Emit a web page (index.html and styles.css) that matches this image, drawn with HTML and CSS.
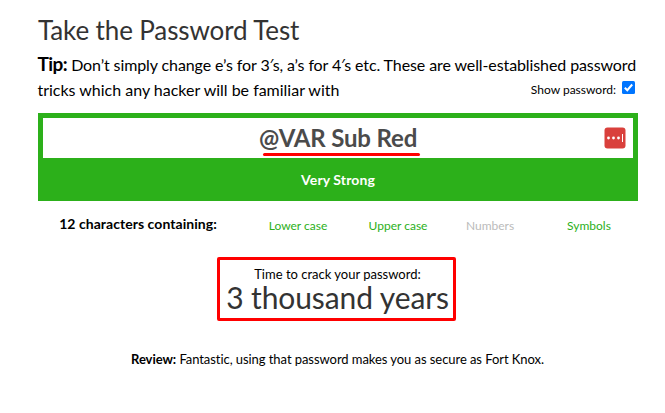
FILE: index.html
```html
<!DOCTYPE html>
<html lang="en">
<head>
<meta charset="utf-8">
<title>Take the Password Test</title>
<link rel="stylesheet" href="styles.css">
</head>
<body>
<main class="test">
  <h1 class="title">Take the Password Test</h1>
  <div class="tip">
    <p class="tip-text"><span class="tip-first"><strong>Tip:</strong> Don’t simply change e’s for 3<span class="prime">′</span>s, a’s for 4<span class="prime">′</span>s etc. These are well-established password</span><br>tricks which any hacker will be familiar with</p>
    <label class="show">Show password: <span class="check"><svg viewBox="0 0 13 13" width="13" height="13"><rect width="13" height="13" rx="1.5" fill="#0075ff"/><path d="M2.8 6.7 5.3 9.2 10.2 3.5" fill="none" stroke="#fff" stroke-width="2"/></svg></span></label>
  </div>
  <section class="meter">
    <div class="field"><span class="password">@VAR Sub Red</span>
      <svg class="manager" viewBox="0 0 22 22" width="22" height="22"><rect x=".5" y=".5" width="21" height="21" rx="3" fill="#d9403c"/><g fill="#fff"><circle cx="4.5" cy="11" r="1.4"/><circle cx="9.5" cy="11" r="1.4"/><circle cx="14.5" cy="11" r="1.4"/><rect x="18" y="7" width="1" height="8"/></g></svg>
    </div>
    <div class="strength">Very Strong</div>
  </section>
  <div class="kinds">
    <strong class="count">12 characters containing:</strong>
    <span class="kind">Lower case</span><span class="kind">Upper case</span><span class="kind off">Numbers</span><span class="kind">Symbols</span>
  </div>
  <section class="crack"><div class="crack-label">Time to crack your password:</div><div class="crack-time">3 thousand years</div></section>
  <p class="review"><strong>Review:</strong> Fantastic, using that password makes you as secure as Fort Knox.</p>
</main>
</body>
</html>
```
FILE: styles.css
```css
* { box-sizing: border-box; }
body { margin: 0; background: #fff; color: #000; font-family: Lato, sans-serif; font-variant-ligatures: none; }
.test { width: 600px; margin-left: 38px; padding-top: 14px; }
.title { margin: 0; font-size: 26px; line-height: 32px; font-weight: 400; color: #333; letter-spacing: -0.12px; }
.tip { position: relative; height: 67px; padding-top: 5px; }
.tip-text { margin: 0 0 0 -0.5px; font-size: 16px; line-height: 25px; white-space: nowrap; letter-spacing: -0.01px; }
.tip-first { letter-spacing: -0.1px; }
.tip-text strong { font-size: 19px; letter-spacing: -0.55px; }
.prime { display: inline-block; width: 3px; font-family: "Open Sans", sans-serif; line-height: 1; }
.show { position: absolute; right: 3px; top: 35px; display: flex; align-items: center; gap: 6px; font-size: 12px; line-height: 18px; }
.check { display: flex; position: relative; top: -3px; }
.meter { height: 88px; background: #2cb01a; padding: 5px; }
.field { position: relative; height: 40px; background: #fff; text-align: center; }
.password { position: relative; display: inline-block; font-size: 24px; line-height: 39px; font-weight: 700; color: #4b4b4b; letter-spacing: -0.16px; }
.password::after { content: ""; position: absolute; left: 4px; right: -3px; bottom: 1px; height: 3px; border-radius: 2px; background: #f00; }
.manager { position: absolute; right: 7px; top: 9px; }
.strength { color: #fff; font-size: 14px; font-weight: 700; line-height: 44px; text-align: center; letter-spacing: 0.1px; }
.kinds { display: grid; grid-template-columns: 200px 120px 80px 104px 94px; height: 56px; padding-top: 13px; text-align: center; line-height: 20px; }
.count { font-size: 14px; letter-spacing: 0.05px; }
.kind { font-size: 12px; color: #2cb01a; padding-top: 2px; }
.off { color: #bbb; }
.crack { width: 239px; height: 64px; margin-left: 179px; padding-left: 2px; border: 3px solid #f00; border-radius: 2px; text-align: center; }
.crack-label { font-size: 13px; line-height: 16px; padding-top: 6px; height: 20px; }
.crack-time { font-size: 30px; line-height: 34px; color: #333; letter-spacing: -0.1px; }
.review { margin: 28px 0 0 -1px; font-size: 13px; line-height: 20px; text-align: center; letter-spacing: -0.06px; }
```
